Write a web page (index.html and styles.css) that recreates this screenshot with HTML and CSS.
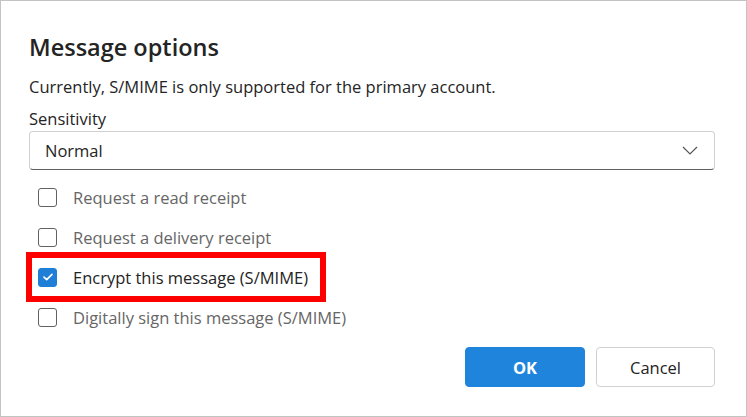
FILE: index.html
```html
<!DOCTYPE html>
<html>
<head>
<meta charset="utf-8">
<link rel="stylesheet" href="styles.css">
</head>
<body>
<div class="dialog">
  <h1 class="title">Message options</h1>
  <p class="note">Currently, S/MIME is only supported for the primary account.</p>
  <div class="field-label">Sensitivity</div>
  <div class="select">
    <span class="select-value">Normal</span>
    <svg class="chev" width="16" height="9" viewBox="0 0 16 9"><path d="M1 1 L8 8 L15 1" fill="none" stroke="#555" stroke-width="1.2"/></svg>
  </div>
  <div class="options">
    <div class="row"><span class="box"></span><span class="label">Request a read receipt</span></div>
    <div class="row"><span class="box"></span><span class="label">Request a delivery receipt</span></div>
    <div class="row highlight"><span class="box checked"><svg width="12" height="10" viewBox="0 0 12 10"><path d="M2 5.2 L4.7 7.7 L10 2.3" fill="none" stroke="#fff" stroke-width="1.7" stroke-linecap="round" stroke-linejoin="round"/></svg></span><span class="label dark">Encrypt this message (S/MIME)</span><span class="annot"></span></div>
    <div class="row"><span class="box"></span><span class="label">Digitally sign this message (S/MIME)</span></div>
  </div>
  <div class="actions">
    <button class="btn primary">OK</button>
    <button class="btn">Cancel</button>
  </div>
</div>
</body>
</html>
```
FILE: styles.css
```css
html, body { margin: 0; padding: 0; background: #fff; }
.dialog {
  box-sizing: border-box;
  width: 747px;
  height: 417px;
  border: 1px solid #c3c3c3;
  padding: 0 31px 0 28px;
  font-family: "Open Sans", "Noto Sans", sans-serif;
  color: #242424;
}
.title {
  margin: 0;
  padding-top: 30px;
  font-size: 23.5px;
  font-weight: 600;
  line-height: 32px;
}
.note {
  margin: 14px 0 0 0;
  font-size: 16.5px;
  line-height: 20px;
}
.field-label {
  margin-top: 12px;
  font-size: 16.5px;
  line-height: 20px;
}
.select {
  box-sizing: border-box;
  height: 39px;
  margin-top: 2px;
  border: 1px solid #d1d1d1;
  border-bottom-color: #616161;
  border-radius: 4px;
  display: flex;
  align-items: center;
  justify-content: space-between;
  padding: 0 16px 0 15px;
}
.select-value { font-size: 16.5px; }
.options { margin-top: 7px; }
.row {
  position: relative;
  height: 40px;
  display: flex;
  align-items: center;
  padding-left: 9px;
}
.box {
  box-sizing: border-box;
  width: 19px;
  height: 19px;
  border: 1px solid #616161;
  border-radius: 3px;
  margin-right: 16px;
  display: flex;
  align-items: center;
  justify-content: center;
}
.box.checked { background: #1f7fd6; border-color: #1f7fd6; }
.label { font-size: 16.5px; color: #666; }
.label.dark { color: #242424; }
.annot {
  position: absolute;
  left: -3px;
  top: -5px;
  width: 300px;
  height: 50px;
  box-sizing: border-box;
  border: 6px solid #ff0000;
}
.actions {
  display: flex;
  justify-content: flex-end;
  gap: 11px;
  margin-top: 10px;
}
.btn {
  box-sizing: border-box;
  width: 119px;
  height: 40px;
  border: 1px solid #d1d1d1;
  border-radius: 4px;
  background: #fff;
  font-family: inherit;
  font-size: 16.5px;
  font-weight: 500;
  color: #242424;
}
.btn.primary { width: 120px; background: #1f84dc; border-color: #1f84dc; color: #fff; font-weight: 700; }
```
